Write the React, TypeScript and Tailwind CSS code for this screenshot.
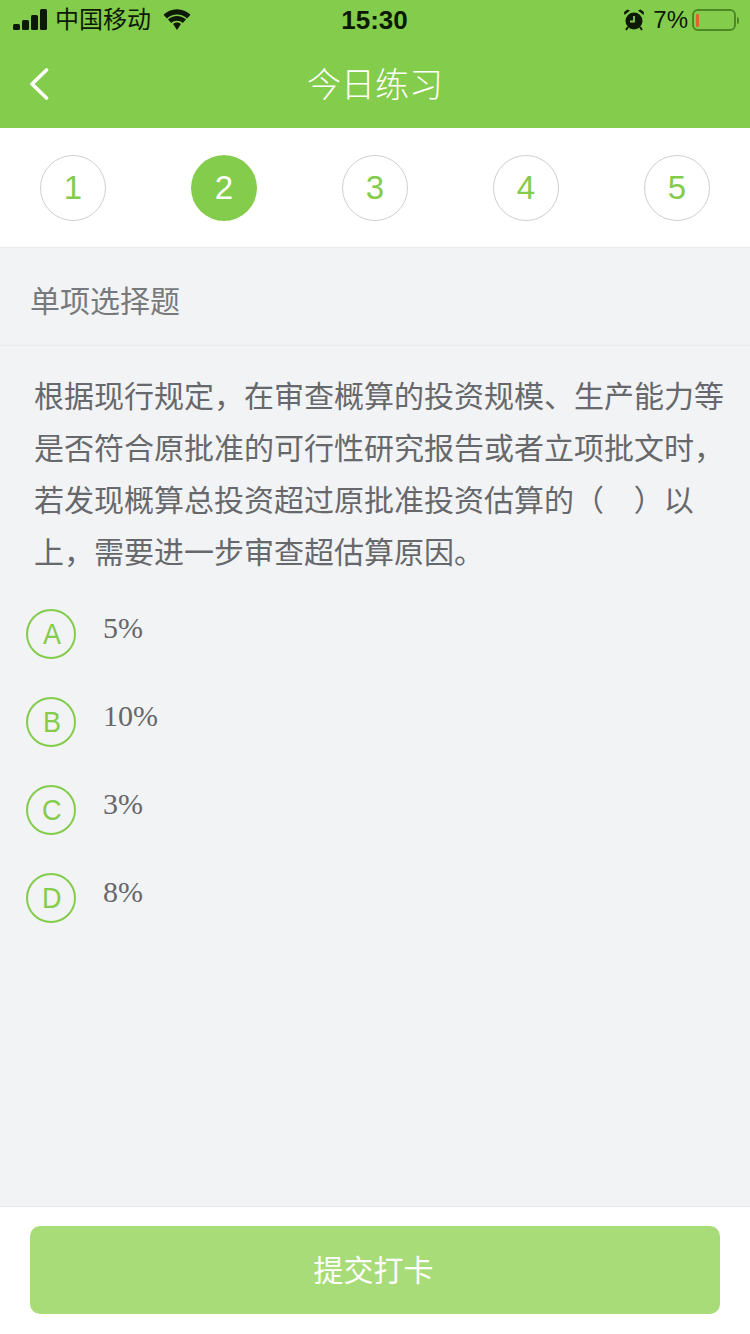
const CJK = "font-['Liberation_Sans','Noto_Sans_CJK_SC',sans-serif]";

const STEPS = [1, 2, 3, 4, 5];
const OPTIONS = [
  { key: "A", text: "5%" },
  { key: "B", text: "10%" },
  { key: "C", text: "3%" },
  { key: "D", text: "8%" },
];

function StatusBar() {
  return (
    <div className="flex h-10 items-center justify-between pl-[13px] pr-[14px] text-[#0c1a05]">
      <div className="flex w-[240px] items-center">
        <svg width="34" height="22" viewBox="0 0 34 22" fill="currentColor">
          <rect x="0" y="15" width="7" height="6" rx="1.500" />
          <rect x="9" y="11" width="7" height="10" rx="1.500" />
          <rect x="18" y="6" width="7" height="15" rx="1.500" />
          <rect x="27" y="0" width="7" height="21" rx="1.500" />
        </svg>
        <span className="ml-[8px] text-[24px] leading-none">中国移动</span>
        <svg className="ml-[11px]" width="30" height="22" viewBox="0 0 30 22" fill="currentColor">
          <path d="M15 5.500c3.900 0 7.400 1.500 10 3.900l3.500-3.700C25 2.300 20.200.2 15 .2S5 2.300 1.500 5.700L5 9.400c2.600-2.400 6.100-3.900 10-3.900z" />
          <path d="M15 11.700c2.200 0 4.200.8 5.700 2.200l3.300-3.500c-2.400-2.200-5.500-3.500-9-3.500s-6.600 1.300-9 3.500l3.300 3.500c1.500-1.400 3.500-2.200 5.700-2.200z" />
          <path d="M15 13.500c-1.500 0-2.800.5-3.900 1.500l3.900 6 3.900-6c-1.100-1-2.400-1.500-3.900-1.500z" />
        </svg>
      </div>
      <span className="text-[26px] font-bold leading-none">15:30</span>
      <div className="flex w-[240px] items-center justify-end">
        <svg width="22" height="24" viewBox="0 0 22 24" fill="currentColor">
          <circle cx="11" cy="13" r="8.500" />
          <path d="M1.500 7 7 2.500 4.500 1.500 1 4zM20.500 7 15 2.500 17.500 1.500 21 4z" />
          <path d="M11 8v5.500H7" fill="none" stroke="#84cc4b" strokeWidth="1.800" />
          <path d="M5 19l-2 3M17 19l2 3" stroke="currentColor" strokeWidth="2" />
        </svg>
        <span className="ml-[8px] text-[24px] leading-none">7%</span>
        <div className="relative ml-[4px] flex h-[22px] w-[44px] items-center rounded-[6px] border-2 border-[#4b8a24] pl-[2px]">
          <div className="h-[13px] w-[3px] rounded-[1px] bg-[#e5622d]" />
          <div className="absolute right-[-5px] h-[7px] w-[2px] rounded-r-sm bg-[#4b8a24]" />
        </div>
      </div>
    </div>
  );
}

function Header() {
  return (
    <div className="bg-[#84cc4b]">
      <StatusBar />
      <div className="relative flex h-[88px] items-center justify-center pt-[2px]">
        <svg className="absolute left-[29px] top-[28px]" width="20" height="32" viewBox="0 0 20 32" fill="none" stroke="white" strokeWidth="3.600" strokeLinecap="round" strokeLinejoin="round">
          <path d="M17.500 2 3 16l14.500 14" />
        </svg>
        <h1 className="text-[34px] font-light leading-none text-white">今日练习</h1>
      </div>
    </div>
  );
}

function StepBar() {
  return (
    <div className="flex h-[120px] items-center justify-between border-b border-[#e9e9e9] bg-white pl-[40px] pr-[40px]">
      {STEPS.map((step) => (
        <div
          key={step}
          className={
            step === 2
              ? "flex h-[66px] w-[66px] items-center justify-center rounded-full bg-[#84cc4b] text-[33px] text-white"
              : "flex h-[66px] w-[66px] items-center justify-center rounded-full border border-[#cfcfcf] text-[33px] text-[#84cc4b]"
          }
        >
          {step}
        </div>
      ))}
    </div>
  );
}

function Question() {
  return (
    <>
      <div className="flex h-[98px] items-center border-b border-[#e9eaec] pt-[10px] pl-[30px] text-[30px] leading-none text-[#77797c]">
        单项选择题
      </div>
      <p className="pl-[34px] pr-[20px] pt-[25px] text-[30px] leading-[52px] text-[#66686b] [word-spacing:1.6px]">
        根据现行规定，在审查概算的投资规模、生产能力等是否符合原批准的可行性研究报告或者立项批文时，若发现概算总投资超过原批准投资估算的（&nbsp;&nbsp;&nbsp;）以上，需要进一步审查超估算原因。
      </p>
    </>
  );
}

function Options() {
  return (
    <div className="flex flex-col gap-[38px] pl-[26px] pt-[30px]">
      {OPTIONS.map((option) => (
        <div key={option.key} className="flex items-start">
          <div className="flex h-[50px] w-[50px] items-center justify-center rounded-full border-2 border-[#84cc4b] pl-[2px] text-[30px] leading-none text-[#84cc4b]">
            <span className="inline-block scale-x-90">{option.key}</span>
          </div>
          <span className="ml-[27px] mt-[1px] font-['Liberation_Serif',serif] text-[30px] leading-[36px] text-[#66686b]">
            {option.text}
          </span>
        </div>
      ))}
    </div>
  );
}

export default function App() {
  return (
    <div className={`flex h-[1334px] w-[750px] flex-col overflow-hidden bg-[#f2f3f5] ${CJK}`}>
      <Header />
      <StepBar />
      <div className="flex-1">
        <Question />
        <Options />
      </div>
      <div className="flex h-[128px] border-t border-[#e9e9e9] bg-white px-[30px] pt-[19px]">
        <button className="flex h-[88px] w-full items-center justify-center rounded-[10px] bg-[#a8dc78] pr-[3px] text-[30px] text-white">
          提交打卡
        </button>
      </div>
    </div>
  );
}
